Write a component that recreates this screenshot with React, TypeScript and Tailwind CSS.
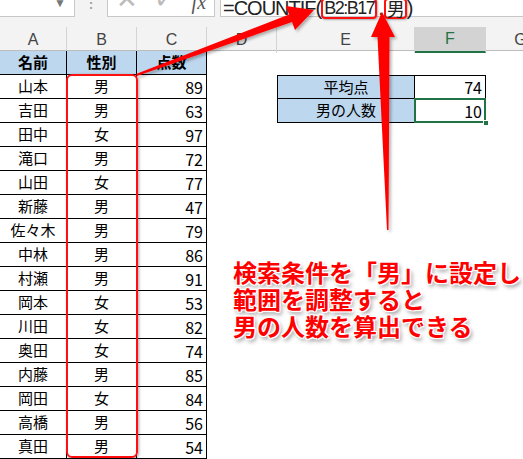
import React from 'react';

const rows: [string, string, number][] = [
  ['山本', '男', 89],
  ['吉田', '男', 63],
  ['田中', '女', 97],
  ['滝口', '男', 72],
  ['山田', '女', 77],
  ['新藤', '男', 47],
  ['佐々木', '男', 79],
  ['中林', '男', 86],
  ['村瀬', '男', 91],
  ['岡本', '女', 53],
  ['川田', '女', 82],
  ['奥田', '女', 74],
  ['内藤', '男', 85],
  ['岡田', '女', 84],
  ['高橋', '男', 56],
  ['真田', '男', 54],
];

const grid = 'grid grid-cols-[67px_70px_70px_70px_138px_71px_70px]';
const cell = 'h-[24px] border-r border-b border-black flex items-center';

const FormulaBar: React.FC = () => (
  <div className="h-[30px] -mt-[13px] flex bg-[#f3f3f3] font-['Liberation_Sans',sans-serif] text-[#777]">
    <div className="w-[75px] bg-white border-r border-b border-[#c8c8c8] flex items-end justify-end pr-[8px] pb-[4px] text-[12px]">
      ▼
    </div>
    <div className="w-[32px] flex items-end justify-center pb-[2px] text-[16px] text-[#999]">⋮</div>
    <div className="w-[108px] bg-white border border-t-0 border-[#c8c8c8] flex items-end justify-around pb-[4px] text-[#bbb]">
      <span className="text-[26px] leading-none">✕</span>
      <span className="text-[26px] leading-none">✓</span>
      <span className="text-[20px] italic leading-none text-[#555] font-['Liberation_Serif',serif]">fx</span>
    </div>
    <div className="w-[5px]" />
    <div className="flex-1 bg-white border-l border-b border-[#c8c8c8] flex items-end pl-[2px] text-[20px] text-[#222] tracking-[-1px] leading-[16px] whitespace-nowrap">
      <span>=COUNTIF(</span>
      <span className="border-2 border-[#ff1010] rounded-[4px] px-[1px] -mb-[3px] pb-[1px] text-[18px] tracking-[-1.5px] shadow-[1px_1px_2px_rgba(0,0,0,0.3)]">B2:B17</span>
      <span className="px-[1px]">,</span>
      <span className="border-2 border-[#ff1010] rounded-[4px] px-[1px] -mb-[3px] pb-[1px] text-[18px] font-['Noto_Sans_CJK_JP',sans-serif] shadow-[1px_1px_2px_rgba(0,0,0,0.3)]">男</span>
      <span>)</span>
    </div>
  </div>
);

const ColumnHeaders: React.FC = () => (
  <div className={`${grid} h-[24px] bg-[#f3f3f3] border-b border-[#bdbdbd] font-['Liberation_Sans',sans-serif] text-[16px] text-[#444]`}>
    {['A', 'B', 'C', 'D', 'E', 'F', 'G'].map((c) =>
      c === 'F' ? (
        <div key={c} className="flex items-center justify-center bg-[#d3d3d3] border-r border-[#d4d4d4] border-b-2 border-b-[#217346] text-[#217346]">
          {c}
        </div>
      ) : (
        <div key={c} className="flex items-center justify-center border-r border-[#d4d4d4]">
          {c}
        </div>
      )
    )}
  </div>
);

const Arrows: React.FC = () => (
  <svg className="absolute left-0 top-0 pointer-events-none" width="523" height="459" viewBox="0 0 523 459">
    <defs>
      <filter id="sh" x="-20%" y="-20%" width="140%" height="140%">
        <feDropShadow dx="2" dy="2" stdDeviation="1.5" floodColor="#000" floodOpacity="0.3" />
      </filter>
    </defs>
    <g fill="#ff0000" filter="url(#sh)">
      <polygon points="137,76 136,74 289,14.5 286,6 314,10 295,30 292,22" />
      <polygon points="382,12 395,37 389.5,37 388.5,230 387,230 377.5,37 371,37" />
    </g>
  </svg>
);

export default function App() {
  return (
    <div className="relative w-[523px] h-[459px] overflow-hidden bg-white font-['Noto_Sans_CJK_JP',sans-serif]">
      <FormulaBar />
      <div className="h-[10px] bg-[#f3f3f3]" />
      <ColumnHeaders />

      <div className="text-[15px] text-black">
        <div className={grid}>
          <div className={`${cell} justify-center bg-[#bdd7ee] font-bold`}>名前</div>
          <div className={`${cell} justify-center bg-[#bdd7ee] font-bold`}>性別</div>
          <div className={`${cell} justify-center bg-[#bdd7ee] font-bold`}>点数</div>
        </div>
        {rows.map(([name, sex, score], i) => (
          <div key={name} className={grid}>
            <div className={`${cell} justify-center`}>{name}</div>
            <div className={`${cell} justify-center`}>{sex}</div>
            <div className={`${cell} justify-end pr-[3px] text-[16px]`}>{score}</div>
            <div />
            {i === 0 && (
              <>
                <div className="h-[24px] border border-black bg-[#bdd7ee] flex items-center justify-center">平均点</div>
                <div className="h-[24px] border border-l-0 border-black flex items-center justify-end pr-[3px] text-[16px]">74</div>
              </>
            )}
            {i === 1 && (
              <>
                <div className="h-[24px] border border-t-0 border-black bg-[#bdd7ee] flex items-center justify-center">男の人数</div>
                <div className="relative h-[24px] border-b border-r border-black flex items-center justify-end pr-[3px] text-[16px]">
                  10
                  <div className="absolute -left-[1px] -top-[1px] -right-[1px] -bottom-[1px] border-2 border-[#217346]" />
                  <div className="absolute -right-[4px] -bottom-[4px] w-[6px] h-[6px] bg-[#217346] border border-white" />
                </div>
              </>
            )}
          </div>
        ))}
      </div>

      {/* range highlight on B2:B17 */}
      <div className="absolute left-[66px] top-[74px] w-[72px] h-[384px] border-2 border-[#ff1010] rounded-[6px] shadow-[1px_1px_3px_rgba(0,0,0,0.35)] pointer-events-none" />

      <Arrows />

      <div className="absolute left-[233px] top-[258px] text-[24px] leading-[27px] font-bold text-[#ff0000] whitespace-nowrap [text-shadow:1px_1px_0_#fff,-1px_-1px_0_#fff,1px_-1px_0_#fff,-1px_1px_0_#fff,0_0_3px_#fff,2px_3px_4px_rgba(0,0,0,0.45)]">
        <div>検索条件を「男」に設定し</div>
        <div>範囲を調整すると</div>
        <div>男の人数を算出できる</div>
      </div>
    </div>
  );
}
